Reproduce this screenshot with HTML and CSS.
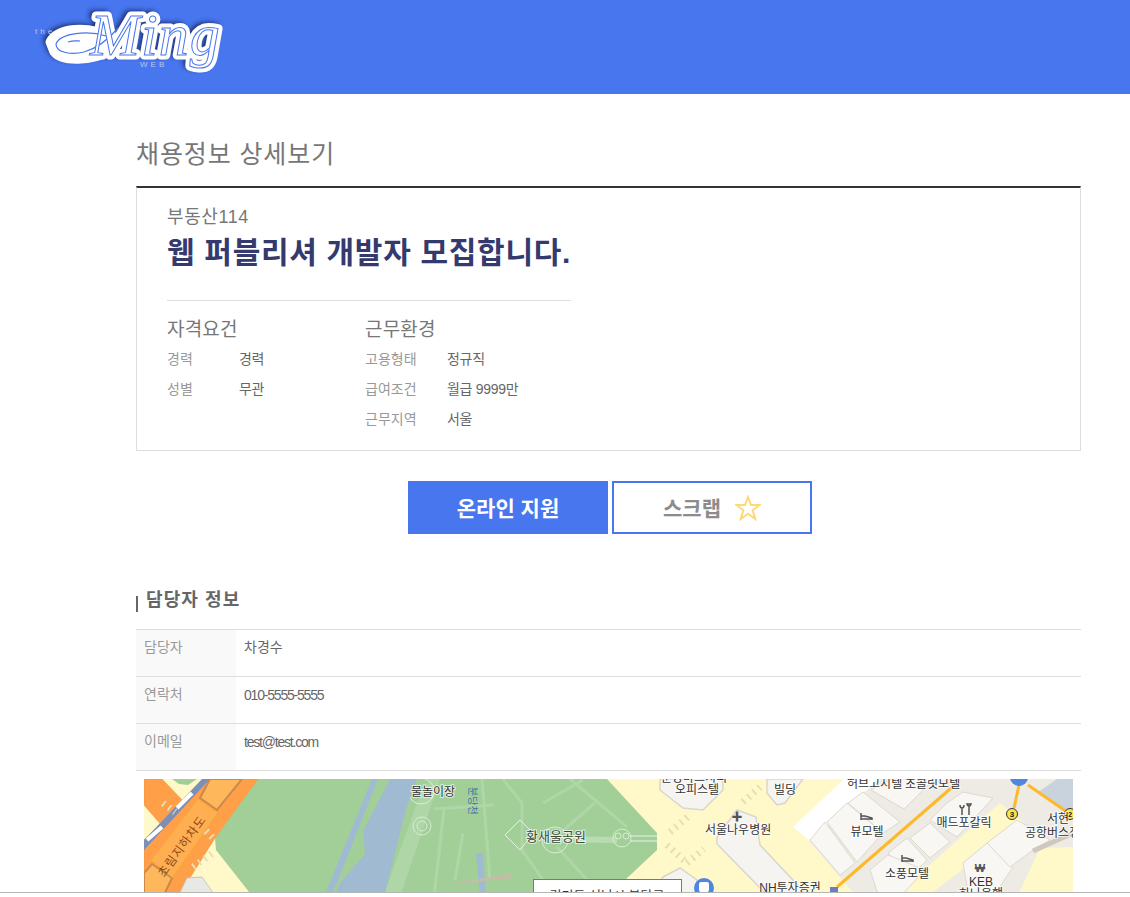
FILE: index.html
```html
<!DOCTYPE html>
<html lang="ko">
<head>
  <meta charset="UTF-8" />
  <meta name="viewport" content="width=device-width, initial-scale=1.0"/>
  <title>채용정보 상세보기</title>
  <link rel="stylesheet" href="styles.css">
</head>
<body>
  <header class="top">
    <svg class="logo" width="200" height="94" viewBox="0 0 200 94">
      <defs>
        <filter id="logoBlur" x="-20%" y="-30%" width="140%" height="160%"><feGaussianBlur stdDeviation="2.5"/></filter>
      </defs>
      <g class="logo-shadow" filter="url(#logoBlur)" transform="translate(-3,-2)">
        <path d="M20 42 C26 28 58 24 82 38 L84 50 C60 62 32 62 24 52 Z"/>
        <text class="logo-name" x="60" y="55">Ming</text>
      </g>
      <g class="logo-halo">
        <path d="M20 42 C26 28 58 24 82 38 L84 50 C60 62 32 62 24 52 Z"/>
        <text class="logo-name" x="60" y="55">Ming</text>
      </g>
      <path class="logo-swash" d="M26 44 C30 33 58 30 76 36 M26 44 C26 53 42 55 54 52 C68 48 78 40 88 28 M38 42 C44 40 48 41 50 41"/>
      <text class="logo-ink" x="60" y="55">Ming</text>
      <text class="logo-the" x="5" y="34">the</text>
      <text class="logo-web" x="110" y="67">WEB</text>
    </svg>
  </header>

  <main class="wrap">
    <h2 class="page-title">채용정보 상세보기</h2>

    <section class="job-box">
      <p class="company">부동산114</p>
      <h1 class="job-title">웹 퍼블리셔 개발자 모집합니다.</h1>
      <div class="job-info">
        <div class="info-col info-col-a">
          <h3>자격요건</h3>
          <dl><dt>경력</dt><dd>경력</dd></dl>
          <dl><dt>성별</dt><dd>무관</dd></dl>
        </div>
        <div class="info-col info-col-b">
          <h3>근무환경</h3>
          <dl><dt>고용형태</dt><dd>정규직</dd></dl>
          <dl><dt>급여조건</dt><dd>월급 9999만</dd></dl>
          <dl><dt>근무지역</dt><dd>서울</dd></dl>
        </div>
      </div>
    </section>

    <div class="actions">
      <button type="button" class="btn btn-apply">온라인 지원</button>
      <button type="button" class="btn btn-scrap">스크랩
        <svg class="star" width="26" height="26" viewBox="0 0 26 26"><polygon points="13,2 16,10 24.5,10 17.7,15.3 20.2,24 13,18.8 5.8,24 8.3,15.3 1.5,10 10,10"/></svg>
      </button>
    </div>

    <h3 class="sub-title">담당자 정보</h3>
    <table class="contact">
      <tr><th>담당자</th><td>차경수</td></tr>
      <tr><th>연락처</th><td class="latin">010-5555-5555</td></tr>
      <tr><th>이메일</th><td class="latin">test@test.com</td></tr>
    </table>

    <div class="map">
      <svg width="929" height="118" viewBox="0 0 929 118">
        <rect class="m-road" width="929" height="118"/>
        <!-- 공원 -->
        <polygon class="m-park" points="114,0 463,0 513,54 513,71 481,101 450,118 109,118 72,71 71,59"/>
        <polygon class="m-pale" points="239,118 273,24 286,0 296,0 256,118"/>
        <path class="m-walk" d="M359 0 L378 24 L378 71 L399 101 M426 0 L483 48 M399 24 L439 1 M416 54 L451 24 M413 68 L446 104 M338 0 L346 101 M319 54 L311 101 M300 30 L290 118 M290 30 L350 26"/>
        <path class="m-walk-wide" d="M400 60 L473 61"/>
        <circle class="m-ring" cx="277" cy="12" r="13"/>
        <circle class="m-ring" cx="278" cy="47" r="9"/>
        <circle class="m-ring" cx="278" cy="47" r="5"/>
        <polygon class="m-line" points="361,56 376,41 389,54 376,71"/>
        <circle class="m-ring" cx="411" cy="61" r="13"/>
        <circle class="m-ring" cx="478" cy="59" r="9"/>
        <circle class="m-ring" cx="474" cy="57" r="3"/>
        <circle class="m-ring" cx="482" cy="57" r="3"/>
        <path class="m-line" d="M486 57 H513 M486 62 H513"/>
        <!-- 하천 -->
        <polygon class="m-water" points="228,0 234,0 193,104 186,118 180,118"/>
        <polygon class="m-water" points="246,0 273,0 262,30 240,118 190,118 196,104 221,75 219,52"/>
        <polygon class="m-water" points="332,74 339,74 342,118 336,118"/>
        <polygon class="m-bridge" points="314,103 368,95 368,99 314,105"/>
        <!-- 지하차도 -->
        <polygon class="m-park" points="28,0 53,0 44,6 35,5"/>
        <polygon class="m-orange" points="0,0 18,0 41,24 19,48 0,26"/>
        <polygon class="m-orange" points="66,0 114,0 71,59 34,118 0,118 0,61"/>
        <polygon class="m-slate" points="58,0 66,0 0,71 0,61"/>
        <line class="m-tick" x1="33" y1="29" x2="48" y2="14"/>
        <line class="m-tick" x1="3" y1="61" x2="18" y2="48"/>
        <polygon class="m-orange-dk" points="66,0 98,0 73,31 56,19"/>
        <polygon class="m-orange-dk" points="8,85 28,99 19,118 0,118 0,94"/>
        <polygon class="m-sub" points="54,21 73,34 28,98 8,81"/>
        <polygon class="m-gray" points="43,99 58,98 72,118 34,118"/>
        <path class="m-zebra" d="M49 88 L69 74 M19 24 L31 33 M62 52 L70 60"/>
        <!-- 건물 블록 -->
        <path class="m-zebra" d="M526 53 L546 36 M523 66 L543 84 M543 84 L560 70 M599 23 L616 8"/>
        <polygon class="m-block" points="516,0 579,0 579,11 559,31 539,29 516,11"/>
        <polygon class="m-block" points="519,98 536,89 553,101 553,118 505,118"/>
        <polygon class="m-block" points="573,58 593,31 612,38 616,66 665,118 625,118 573,65"/>
        <polygon class="m-block" points="623,0 659,0 641,24 633,26 623,14"/>
        <polygon class="m-street" points="666,63 729,0 929,0 929,118 713,118"/>
        <polygon class="m-white" points="649,48 700,0 735,0 666,62"/>
        <polygon class="m-road" points="749,118 856,24 879,43 783,118"/>
        <polygon class="m-road" points="896,69 929,68 929,118 873,118"/>
        <polygon class="m-bus" points="893,14 913,0 929,0 929,38 916,29"/>
        <polygon class="m-cell" points="703,24 739,54 713,83 683,43"/>
        <polygon class="m-cell" points="666,61 681,43 711,84 696,96"/>
        <polygon class="m-cell" points="719,13 756,43 739,54 704,24"/>
        <polygon class="m-cell" points="727,11 747,0 790,0 760,30"/>
        <polygon class="m-cell" points="803,24 819,13 849,19 813,58 786,41"/>
        <polygon class="m-cell" points="766,59 786,44 806,63 786,79"/>
        <polygon class="m-cell" points="744,74 763,59 783,81 766,98"/>
        <polygon class="m-cell" points="726,91 744,76 781,91 756,118 735,118"/>
        <polygon class="m-cell" points="819,84 843,64 869,88 849,118 825,118"/>
        <polygon class="m-cell" points="873,41 906,61 889,71 866,88 843,64"/>
        <path class="m-wall" d="M889 72 L929 54"/>
        <!-- 노선 -->
        <path class="m-route" d="M813 4 L693 108"/>
        <path class="m-route" d="M875 6 L870 29 M884 6 L923 33"/>
        <circle class="m-stop" cx="868" cy="35" r="5.5"/><text class="m-num" x="868" y="38">3</text>
        <circle class="m-stop" cx="926" cy="35" r="5.5"/><text class="m-num" x="926" y="38">2</text>
        <circle class="m-pin" cx="875" cy="-2" r="9"/>
        <rect class="m-corner" x="686" y="108" width="8" height="6"/>
        <!-- 글자 -->
        <text class="m-label" x="289" y="17" text-anchor="middle">물놀이장</text>
        <text class="m-stream" transform="translate(325,8) rotate(90)">분당천</text>
        <text class="m-label m-park-label" x="412" y="62" text-anchor="middle">황새울공원</text>
        <text class="m-under" transform="translate(20,99) rotate(-54)">초림지하차도</text>
        <text class="m-label" x="550" y="3" text-anchor="middle">분당마크시티</text>
        <text class="m-label" x="553" y="15" text-anchor="middle">오피스텔</text>
        <text class="m-label" x="561" y="55">서울나우병원</text>
        <text class="m-label" x="641" y="15" text-anchor="middle">빌딩</text>
        <text class="m-label" x="703" y="9">허브고시텔</text>
        <text class="m-label" x="761" y="9">초콜릿모텔</text>
        <text class="m-label" x="723" y="57" text-anchor="middle">뷰모텔</text>
        <text class="m-label" x="820" y="48" text-anchor="middle">매드포갈릭</text>
        <text class="m-label" x="763" y="99" text-anchor="middle">소풍모텔</text>
        <text class="m-label" x="903" y="44">서현</text>
        <text class="m-label" x="881" y="58">공항버스정</text>
        <text class="m-label" x="837" y="107" text-anchor="middle">KEB</text>
        <text class="m-label" x="837" y="119" text-anchor="middle">하나은행</text>
        <text class="m-label" x="646" y="113" text-anchor="middle">NH투자증권</text>
        <text class="m-symbol" x="593" y="42" text-anchor="middle">✚</text>
        <text class="m-symbol" x="836" y="93" text-anchor="middle">₩</text>
        <path class="m-icon" d="M717 34 V41 M717 37 H721 L728 39 V41 M717 40 H728"/>
        <path class="m-icon" d="M758 76 V83 M758 79 H762 L769 81 V83 M758 82 H769"/>
        <path class="m-icon" d="M818 28 V36 M825 24 V36 M816 26 C816 30 820 30 820 26 M823 24 C823 28 827 28 827 24"/>
        <!-- 말풍선 -->
        <rect class="m-info" x="389.500" y="100.500" width="148" height="30"/>
        <text class="m-info-text" x="463" y="121" text-anchor="middle">경기도 성남시 분당구</text>
        <circle class="m-bus-icon" cx="560" cy="109" r="10"/>
        <rect class="m-bus-win" x="555" y="103" width="10" height="10" rx="2"/>
      </svg>
    </div>
  </main>

  <div class="bottom-line"></div>
</body>
</html>
```

FILE: styles.css
```css
html, body {
  margin: 0;
  padding: 0;
  height: 897px;
  overflow: hidden;
}

body {
  font-family: "Liberation Sans", "Noto Sans CJK KR", sans-serif;
  background: #fff;
  color: #666;
}

.top {
  height: 94px;
  padding-left: 30px;
  background: #4876ef;
}

.logo {
  display: block;
}

.logo-the, .logo-web {
  font-size: 8px;
  letter-spacing: 3px;
  fill: #b9c8ef;
}

.logo-name, .logo-ink {
  font-family: "Liberation Serif", serif;
  font-style: italic;
  font-size: 60px;
  letter-spacing: 1px;
}

.logo-shadow {
  fill: #1d2f6e;
  stroke: #1d2f6e;
  stroke-width: 7px;
}

.logo-halo {
  fill: #fff;
  stroke: #fff;
  stroke-width: 9px;
  stroke-linejoin: round;
}

.logo-ink {
  fill: #fff;
  stroke: #4876ef;
  stroke-width: 1px;
}

.logo-swash {
  fill: none;
  stroke: #4876ef;
  stroke-width: 1.2px;
}

.wrap {
  width: 945px;
  margin-left: 136px;
}

.page-title {
  margin: 0;
  padding-top: 41px;
  height: 51px;
  font-size: 25px;
  line-height: 38px;
  font-weight: 400;
  letter-spacing: 0.9px;
  color: #777;
}

.job-box {
  box-sizing: border-box;
  height: 265px;
  padding: 17px 31px 0 30px;
  border: 1px solid #ddd;
  border-top: 2px solid #333;
}

.company {
  margin: 0;
  font-size: 18px;
  line-height: 24px;
  letter-spacing: 0.6px;
  color: #777;
}

.job-title {
  width: 404px;
  margin: 0;
  padding-bottom: 23px;
  border-bottom: 1px solid #ddd;
  font-size: 30px;
  line-height: 48px;
  font-weight: 700;
  letter-spacing: 0.7px;
  white-space: nowrap;
  color: #343a6d;
}

.job-info {
  display: flex;
  padding-top: 16px;
}

.info-col h3 {
  margin: 0;
  font-size: 19px;
  line-height: 26px;
  font-weight: 400;
  letter-spacing: 0.2px;
  color: #777;
}

.info-col-a {
  width: 198px;
}

.info-col dl {
  display: flex;
  margin: 0;
  height: 30px;
  font-size: 14px;
  line-height: 30px;
}

.info-col h3 + dl {
  margin-top: 1px;
}

.info-col dt {
  width: 72px;
  color: #999;
}

.info-col-b dt {
  width: 82px;
}

.info-col dd {
  margin: 0;
  color: #666;
  letter-spacing: -0.3px;
}

.actions {
  display: flex;
  gap: 4px;
  margin: 30px 0 0 272px;
}

.btn {
  box-sizing: border-box;
  display: flex;
  align-items: center;
  justify-content: center;
  gap: 14px;
  width: 200px;
  height: 53px;
  padding: 0 0 2px;
  font-family: inherit;
  font-size: 21px;
  font-weight: 700;
  cursor: pointer;
}

.btn-apply {
  border: 0;
  background: #4876ef;
  color: #fff;
}

.btn-scrap {
  border: 2px solid #4876ef;
  background: #fff;
  color: #8c8c8c;
}

.star {
  margin-top: 2px;
}

.star polygon {
  fill: #fff;
  stroke: #ffd978;
  stroke-width: 2px;
}

.sub-title {
  position: relative;
  margin: 52px 0 15px;
  padding-left: 10px;
  font-size: 18px;
  line-height: 28px;
  letter-spacing: 1.1px;
  font-weight: 700;
  color: #666;
}

.sub-title::before {
  content: "";
  position: absolute;
  left: 0;
  top: 10px;
  width: 2px;
  height: 16px;
  background: #666;
}

.contact {
  width: 100%;
  border-collapse: collapse;
  border-top: 1px solid #ddd;
}

.contact tr {
  height: 47px;
  border-bottom: 1px solid #ddd;
}

.contact th, .contact td {
  box-sizing: border-box;
  padding: 7px 8px 0;
  vertical-align: top;
  text-align: left;
  font-size: 14px;
  line-height: 20px;
  font-weight: 400;
}

.contact th {
  width: 100px;
  background: #f9f9f9;
  color: #999;
}

.contact td {
  color: #666;
}

.contact .latin {
  padding-top: 8px;
  letter-spacing: -1.2px;
}

.map {
  height: 118px;
  margin: 8px 8px 0;
  overflow: hidden;
}

.map svg {
  display: block;
  overflow: hidden;
}

.m-road { fill: #fff8c9; }
.m-park { fill: #a2cf98; }
.m-pale { fill: #afd6a6; }
.m-water { fill: #a0bad2; }
.m-bridge { fill: #c6bba9; }
.m-orange { fill: #ff9f48; stroke: #e88f42; stroke-width: 0.5px; }
.m-orange-dk { fill: #ffb75c; stroke: #c98a4a; stroke-width: 2px; }
.m-sub { fill: #ffae52; stroke: #f0c22c; stroke-width: 1px; stroke-dasharray: 3 2; }
.m-slate { fill: #7c8fb8; }
.m-tick { stroke: #fff; stroke-width: 4px; }
.m-gray { fill: #e8e8e4; stroke: #c8c8c0; }
.m-block { fill: #f6f4f0; stroke: #dad6cd; stroke-width: 1.5px; }
.m-street { fill: #eeebe4; }
.m-cell { fill: #f8f7f4; stroke: #dcd9d1; stroke-width: 1px; }
.m-white { fill: #fff; }
.m-bus { fill: #c8d3de; }
.m-wall { fill: none; stroke: #cfc8bc; stroke-width: 5px; }
.m-zebra { fill: none; stroke: #e6dfb4; stroke-width: 7px; stroke-dasharray: 2 5; }
.m-walk { fill: none; stroke: #afd6a6; stroke-width: 3px; }
.m-walk-wide { fill: none; stroke: #b8dcb0; stroke-width: 6px; }
.m-ring { fill: none; stroke: #d8ecd4; stroke-width: 1px; }
.m-line { fill: none; stroke: #e6f3e2; stroke-width: 1px; }
.m-route { fill: none; stroke: #fdb92a; stroke-width: 3px; }
.m-stop { fill: #fbe64a; stroke: #333; stroke-width: 1px; }
.m-num { font-size: 8px; font-weight: 700; text-anchor: middle; fill: #222; }
.m-pin { fill: #4f86e0; }
.m-corner { fill: #6a7fc0; }
.m-icon { fill: none; stroke: #555; stroke-width: 1.5px; }
.m-symbol { font-size: 11px; font-weight: 700; fill: #555; }

.m-label {
  font-size: 12px;
  fill: #333;
  stroke: #fff;
  stroke-width: 2px;
  paint-order: stroke;
  stroke-opacity: 0.7;
}

.m-park-label {
  font-size: 13px;
  fill: #3c4a3c;
}

.m-stream {
  font-size: 10px;
  fill: #4a6fa8;
}

.m-under {
  font-size: 12px;
  letter-spacing: 1px;
  fill: #8a4a1c;
}

.m-info {
  fill: #fff;
  stroke: #6b7a9c;
  stroke-width: 1px;
}

.m-info-text {
  font-size: 13px;
  fill: #333;
}

.m-bus-icon { fill: #4f86e0; }
.m-bus-win { fill: #fff; }

.bottom-line {
  position: fixed;
  left: 0;
  right: 0;
  bottom: 0;
  height: 4px;
  background: #fff;
  border-top: 1px solid #b5b5b5;
}
```
